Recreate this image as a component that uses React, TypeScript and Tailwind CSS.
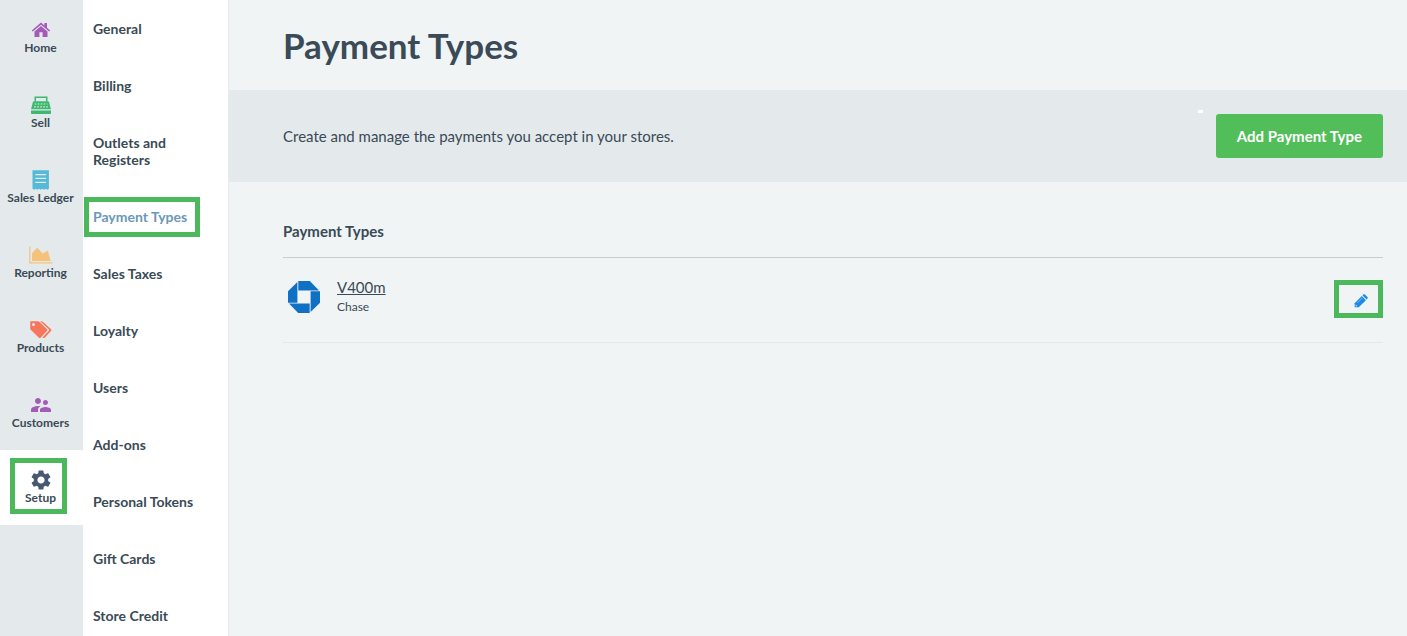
import type { ReactNode } from "react";
import { MdSettings, MdSupervisorAccount } from "react-icons/md";

function HomeIcon() {
  return (
    <svg viewBox="0 0 24 24" className="size-6" fill="#a35bb8">
      <path d="M12 4.6 2.8 12.4l1 1.2L12 6.7l8.2 6.9 1-1.2-3.2-2.7V4.9h-2.6v2.6z" />
      <path d="M12 8.1 5.5 13.5V19h4.9v-4.8h3.2V19h4.9v-5.5z" />
    </svg>
  );
}

function SellIcon() {
  return (
    <svg viewBox="0 0 24 24" className="size-6" fill="#3dba6f">
      <path fillRule="evenodd" d="M5.5 3.5h13v5h-13zM7 5v3.5h10V5z" />
      <path d="M5 8.2h14c.6 0 .9.2 1.1.8l1.8 7.2H2.1L3.9 9c.2-.6.5-.8 1.1-.8z" />
      <path d="M2 17.6h20v2.6c0 .5-.3.8-.8.8H2.8c-.5 0-.8-.3-.8-.8z" />
      <path
        stroke="#d3ecdf"
        strokeWidth="1.2"
        strokeDasharray="1.6 1.4"
        d="M5.7 11h12.8M5.2 13.8h14"
      />
    </svg>
  );
}

function LedgerIcon() {
  return (
    <svg viewBox="0 0 24 24" className="size-6">
      <path
        fill="#55b9d8"
        d="M3.5 2.3h16.4v18.5l-1.6 1-1.6-1-1.7 1-1.6-1-1.7 1-1.6-1-1.7 1-1.6-1-1.7 1-1.6-1z"
      />
      <path stroke="#e4e9ec" strokeWidth="1.2" d="M6.3 6.6h10.8M6.3 10.4h10.8M6.3 14.4h10.8" />
    </svg>
  );
}

function ReportingIcon() {
  return (
    <svg viewBox="0 0 24 24" className="size-6" fill="#f4c27a">
      <path d="M.2 3.5h1.2v15.7h22v1.3H.2z" />
      <path d="M3 18V10.3L8.2 4.7l5.5 5.7 5.2-2.8L21.6 18z" />
    </svg>
  );
}

function ProductsIcon() {
  return (
    <svg viewBox="0 0 24 24" className="size-6" fill="#f7775d">
      <path
        fillRule="evenodd"
        d="M2.2 3.2h6.6c.7 0 1.2.2 1.7.7l7.3 7c.7.7.7 1.5 0 2.2l-5.9 6.4c-.7.7-1.5.7-2.2 0L2 12.1c-.5-.5-.8-1-.8-1.7V4.2c0-.6.4-1 1-1zM4.5 5a1.5 1.5 0 1 0 0 3 1.5 1.5 0 0 0 0-3z"
      />
      <path d="M11.1 3.2h1.4c.6 0 1.1.3 1.6.7l7.7 7c.8.7.8 1.5.1 2.2l-5.9 6.4c-.7.8-1.7.8-2.5.1l6-6.5c.7-.7.7-1.5 0-2.2z" />
    </svg>
  );
}

function ChaseLogo() {
  return (
    <svg viewBox="0 0 32 32" className="size-8" fill="#0f70c4">
      <path d="M10.3 0h11.5l9.2 9.4H10.3z" />
      <path d="M32 10.3v11.5L22.6 31V10.3z" />
      <path d="M21.7 32H10.2L1 22.6h20.7z" />
      <path d="M0 21.7V10.2L9.4 1v20.7z" />
    </svg>
  );
}

function PencilIcon() {
  return (
    <svg viewBox="0 0 14 14" className="size-[14px]">
      <path fill="#1b8be8" d="m.7 9.2 7.1-7.1 4.1 4.1-7.1 7.1H.7z" />
      <path fill="#1b8be8" d="m8.5 1.4.8-.8c.5-.5 1.1-.5 1.6 0l2.5 2.5c.5.5.5 1.1 0 1.6l-.8.8z" />
      <path stroke="#8cc7f5" strokeWidth=".8" d="m3.4 8.8 4.9-4.9" />
      <path fill="#f0f4f5" d="m1.7 10.6 1.7 1.7H1.7z" />
    </svg>
  );
}

type NavItem = { label: string; icon: ReactNode; active?: boolean };

const navItems: NavItem[] = [
  { label: "Home", icon: <HomeIcon /> },
  { label: "Sell", icon: <SellIcon /> },
  { label: "Sales Ledger", icon: <LedgerIcon /> },
  { label: "Reporting", icon: <ReportingIcon /> },
  { label: "Products", icon: <ProductsIcon /> },
  { label: "Customers", icon: <MdSupervisorAccount className="size-6 text-[#a35bb8]" /> },
  { label: "Setup", icon: <MdSettings className="size-6 text-[#475872]" />, active: true },
];

const setupLinks = [
  "General",
  "Billing",
  "Outlets and Registers",
  "Payment Types",
  "Sales Taxes",
  "Loyalty",
  "Users",
  "Add-ons",
  "Personal Tokens",
  "Gift Cards",
  "Store Credit",
];

export default function App() {
  return (
    <div className="flex h-screen overflow-hidden bg-[#f0f4f5] font-['Lato',sans-serif] text-[#3a4a56]">
      <nav className="w-[83px] shrink-0 bg-[#e4e9ec]">
        {navItems.map((item) => (
          <a
            key={item.label}
            href="#"
            className={`relative flex h-[75px] flex-col items-center pr-0.5 pt-[18px] text-xs leading-3 font-bold whitespace-nowrap ${
              item.active ? "bg-white" : ""
            }`}
          >
            {item.icon}
            {item.label}
            {item.active && (
              <span className="absolute top-2 left-2.5 h-14 w-[57px] border-5 border-[#4cb85c]" />
            )}
          </a>
        ))}
      </nav>

      <nav className="w-[146px] shrink-0 border-r border-[#e6eaed] bg-white">
        {setupLinks.map((label) => (
          <a
            key={label}
            href="#"
            className={`relative block py-5 pr-6 pl-2.5 text-sm leading-[17px] font-bold ${
              label === "Payment Types" ? "text-[#6a98b8]" : ""
            }`}
          >
            {label}
            {label === "Payment Types" && (
              <span className="absolute top-[9px] left-px h-10 w-[116px] border-5 border-[#4cb85c]" />
            )}
          </a>
        ))}
      </nav>

      <main className="min-w-0 flex-1">
        <h1 className="py-[22px] pl-[54px] text-[35px] leading-[46px] font-bold">Payment Types</h1>

        <div className="relative flex items-center justify-between bg-[#e4e9ec] py-6 pr-6 pl-[54px]">
          <p className="text-[15px]">Create and manage the payments you accept in your stores.</p>
          <span className="absolute top-5 right-[204px] h-[3px] w-[5px] bg-white" />
          <button className="h-11 rounded-[3px] bg-[#52be5a] px-[21px] text-[15px] font-bold text-white">
            Add Payment Type
          </button>
        </div>

        <section className="pt-[39px] pr-6 pl-[54px]">
          <h2 className="border-b border-[#c6cdd0] pb-4 text-[15px] leading-5 font-bold">
            Payment Types
          </h2>
          <div className="flex items-start border-b border-[#e3e8ea] pt-[22px] pb-6">
            <div className="mt-px ml-[5px]">
              <ChaseLogo />
            </div>
            <div className="ml-[17px]">
              <a href="#" className="block text-[15px] leading-[15px] underline underline-offset-1">
                V400m
              </a>
              <p className="mt-1 text-xs leading-4">Chase</p>
            </div>
            <button
              aria-label="Edit V400m"
              className="ml-auto flex h-[38px] w-[49px] items-center justify-center border-5 border-[#4cb85c] pt-1 pl-1"
            >
              <PencilIcon />
            </button>
          </div>
        </section>
      </main>
    </div>
  );
}
